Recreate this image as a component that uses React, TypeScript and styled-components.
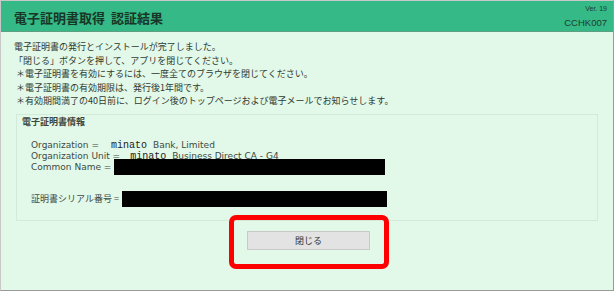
import React from "react";
import styled, { createGlobalStyle } from "styled-components";

const Global = createGlobalStyle`
  html, body { margin: 0; padding: 0; background: #ffffff; }
  body { font-family: "Noto Sans CJK JP", "Noto Sans", sans-serif; }
`;

const Frame = styled.div`
  width: 612px;
  height: 289px;
  border: 1px solid #c8c8c8;
  border-right-color: #9a9a9a;
  border-bottom-color: #9a9a9a;
  background: #e2f8e8;
  display: flex;
  flex-direction: column;
  box-sizing: content-box;
`;

const Header = styled.header`
  height: 30px;
  background: #35b987;
  border-bottom: 1px solid #5f9e80;
  display: flex;
  align-items: center;
  justify-content: space-between;
  padding: 0 6px 0 13px;
`;

const Title = styled.h1`
  margin: 0;
  font-size: 13px;
  font-weight: 700;
  color: #173626;
  line-height: 1;
  padding-top: 3px;
  white-space: pre;
`;

const Codes = styled.div`
  display: flex;
  flex-direction: column;
  align-items: flex-end;
  color: #1e3c2c;
  font-family: "Liberation Sans", sans-serif;
  line-height: 1;
`;

const Ver = styled.span`
  font-size: 7px;
  margin-bottom: 6px;
`;

const Code = styled.span`
  font-size: 9.5px;
`;

const Body = styled.main`
  flex: 1;
  padding: 8px 13px 0 13px;
  display: flex;
  flex-direction: column;
`;

const Messages = styled.div`
  display: flex;
  flex-direction: column;
`;

const Line = styled.p<{ $bullet?: boolean }>`
  margin: 0;
  font-size: 9px;
  line-height: 13.6px;
  color: #2f3a33;
  padding-left: ${(p) => (p.$bullet ? "2px" : "0")};
  white-space: nowrap;
`;

const InfoBox = styled.section`
  margin: 6px 1px 0 2px;
  width: 582px;
  height: 107px;
  box-sizing: border-box;
  border: 1px solid #d3ead8;
  padding: 1px 0 0 5px;
  display: flex;
  flex-direction: column;
`;

const Legend = styled.div`
  font-size: 9px;
  font-weight: 700;
  color: #3b463f;
  line-height: 12px;
`;

const Rows = styled.div`
  margin-top: 12px;
  padding-left: 9px;
  display: flex;
  flex-direction: column;
  font-family: "DejaVu Sans", "Noto Sans CJK JP", sans-serif;
  font-size: 9px;
  color: #3e4a44;
`;

const Row = styled.div<{ $gap?: number }>`
  display: flex;
  align-items: center;
  height: 10.8px;
  margin-top: ${(p) => p.$gap ?? 0}px;
  white-space: nowrap;
`;

const Mono = styled.span<{ $indent: number }>`
  font-family: "Liberation Mono", monospace;
  font-size: 10px;
  color: #222;
  margin-left: ${(p) => p.$indent}px;
  margin-right: 6px;
`;

const JpLabel = styled.span`
  font-family: "Noto Sans CJK JP", sans-serif;
  font-size: 9px;
`;

const Redacted = styled.span<{ $width: number }>`
  display: inline-block;
  width: ${(p) => p.$width}px;
  height: 16px;
  background: #000;
  margin-left: 3px;
`;

const ButtonArea = styled.div`
  display: flex;
  justify-content: center;
  margin-top: -6px;
`;

const Highlight = styled.div`
  width: 150px;
  height: 44px;
  border: 5px solid #ff0000;
  border-radius: 7px;
  display: flex;
  justify-content: center;
  align-items: center;
  margin-left: 3px;
`;

const CloseButton = styled.button`
  width: 123px;
  height: 19px;
  background: #e3e3e3;
  border: 1px solid #c9c9c9;
  border-radius: 0;
  font-family: "Noto Sans CJK JP", sans-serif;
  font-size: 9px;
  color: #333;
  padding: 0;
  margin-top: -3px;
  cursor: pointer;
`;

export default function App() {
  return (
    <>
      <Global />
      <Frame>
        <Header>
          <Title>電子証明書取得  認証結果</Title>
          <Codes>
            <Ver>Ver. 19</Ver>
            <Code>CCHK007</Code>
          </Codes>
        </Header>
        <Body>
          <Messages>
            <Line>電子証明書の発行とインストールが完了しました。</Line>
            <Line>「閉じる」ボタンを押して、アプリを閉じてください。</Line>
            <Line $bullet>＊電子証明書を有効にするには、一度全てのブラウザを閉じてください。</Line>
            <Line $bullet>＊電子証明書の有効期限は、発行後1年間です。</Line>
            <Line $bullet>＊有効期間満了の40日前に、ログイン後のトップページおよび電子メールでお知らせします。</Line>
          </Messages>
          <InfoBox>
            <Legend>電子証明書情報</Legend>
            <Rows>
              <Row>
                Organization =<Mono $indent={12}>minato</Mono>Bank, Limited
              </Row>
              <Row>
                Organization Unit =<Mono $indent={10}>minato</Mono>Business Direct CA - G4
              </Row>
              <Row>
                Common Name =<Redacted $width={271} />
              </Row>
              <Row $gap={21}>
                <JpLabel>証明書シリアル番号 =</JpLabel>
                <Redacted $width={265} />
              </Row>
            </Rows>
          </InfoBox>
          <ButtonArea>
            <Highlight>
              <CloseButton>閉じる</CloseButton>
            </Highlight>
          </ButtonArea>
        </Body>
      </Frame>
    </>
  );
}
